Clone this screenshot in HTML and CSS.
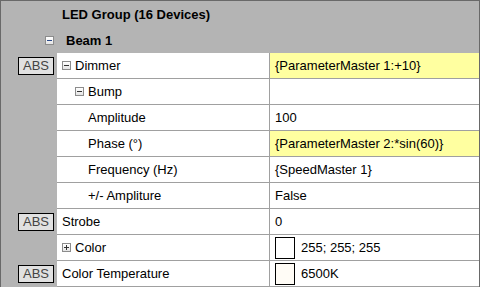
FILE: index.html
```html
<!DOCTYPE html>
<html lang="en">
<head>
    <meta charset="UTF-8">
    <title>Property Grid</title>
    <link rel="stylesheet" href="styles.css">
</head>
<body>
    <div class="grid">
        <div class="group-row">
            <span class="group-title">LED Group (16 Devices)</span>
        </div>
        <div class="group-row">
            <span class="toggle toggle-blue"></span>
            <span class="group-title">Beam 1</span>
        </div>

        <div class="row">
            <div class="side"><span class="abs">ABS</span></div>
            <div class="name"><span class="toggle"></span>Dimmer</div>
            <div class="value hl">{ParameterMaster 1:+10}</div>
        </div>
        <div class="row">
            <div class="side"></div>
            <div class="name lvl1"><span class="toggle"></span>Bump</div>
            <div class="value"></div>
        </div>
        <div class="row">
            <div class="side"></div>
            <div class="name lvl2">Amplitude</div>
            <div class="value">100</div>
        </div>
        <div class="row">
            <div class="side"></div>
            <div class="name lvl2">Phase (°)</div>
            <div class="value hl">{ParameterMaster 2:*sin(60)}</div>
        </div>
        <div class="row">
            <div class="side"></div>
            <div class="name lvl2">Frequency (Hz)</div>
            <div class="value">{SpeedMaster 1}</div>
        </div>
        <div class="row">
            <div class="side"></div>
            <div class="name lvl2">+/- Ampliture</div>
            <div class="value">False</div>
        </div>
        <div class="row">
            <div class="side"><span class="abs">ABS</span></div>
            <div class="name">Strobe</div>
            <div class="value">0</div>
        </div>
        <div class="row">
            <div class="side"></div>
            <div class="name"><span class="toggle plus"></span>Color</div>
            <div class="value"><span class="swatch"></span>255; 255; 255</div>
        </div>
        <div class="row">
            <div class="side"><span class="abs">ABS</span></div>
            <div class="name">Color Temperature</div>
            <div class="value"><span class="swatch warm"></span>6500K</div>
        </div>
    </div>
</body>
</html>
```

FILE: styles.css
```css
body {
    margin: 0;
    padding: 0;
    font-family: "Liberation Sans", Arial, sans-serif;
    font-size: 13px;
    color: #000;
}

.grid {
    width: 478px;
    height: 286px;
    background: #b4b4b4;
    border-top: 1px solid #696969;
    border-left: 1px solid #696969;
    border-right: 1px solid #696969;
    overflow: hidden;
}

.group-row {
    height: 26px;
    display: flex;
    align-items: center;
    padding-left: 44px;
}

.group-title {
    font-weight: bold;
    font-size: 13px;
    margin-left: 17px;
}

.toggle + .group-title {
    margin-left: 8px;
}

.row {
    display: flex;
    height: 25px;
    border-bottom: 1px solid #a0a0a0;
}

.side {
    width: 56px;
    flex-shrink: 0;
    background: #b4b4b4;
    display: flex;
    align-items: center;
    justify-content: flex-end;
    margin-bottom: -1px;
}

.abs {
    box-sizing: border-box;
    width: 36px;
    height: 18px;
    margin-right: 3px;
    border: 1px solid #000;
    background: #e1e1e1;
    color: #444;
    font-size: 13px;
    line-height: 16px;
    text-align: center;
}

.name {
    box-sizing: border-box;
    width: 213px;
    flex-shrink: 0;
    background: #fff;
    display: flex;
    align-items: center;
    padding-left: 5px;
    border-right: 1px solid #a0a0a0;
    white-space: nowrap;
}

.name.lvl1 {
    padding-left: 18px;
}

.name.lvl2 {
    padding-left: 31px;
}

.value {
    box-sizing: border-box;
    flex: 1;
    min-width: 0;
    background: #fff;
    display: flex;
    align-items: center;
    padding-left: 5px;
    white-space: nowrap;
}

.value.hl {
    background: #ffffa0;
}

.toggle {
    position: relative;
    box-sizing: border-box;
    width: 9px;
    height: 9px;
    border: 1px solid #8c8c8c;
    background: linear-gradient(#fff, #e4e4e4);
    margin-right: 4px;
    flex-shrink: 0;
}

.toggle::before {
    content: "";
    position: absolute;
    left: 1px;
    top: 3px;
    width: 5px;
    height: 1px;
    background: #333;
}

.toggle.plus::after {
    content: "";
    position: absolute;
    left: 3px;
    top: 1px;
    width: 1px;
    height: 5px;
    background: #333;
}

.toggle-blue::before {
    background: #2a4a8a;
}

.swatch {
    box-sizing: border-box;
    width: 20px;
    height: 22px;
    border: 1px solid #000;
    background: #fff;
    margin-right: 6px;
}

.swatch.warm {
    background: #fffcf6;
}
```
